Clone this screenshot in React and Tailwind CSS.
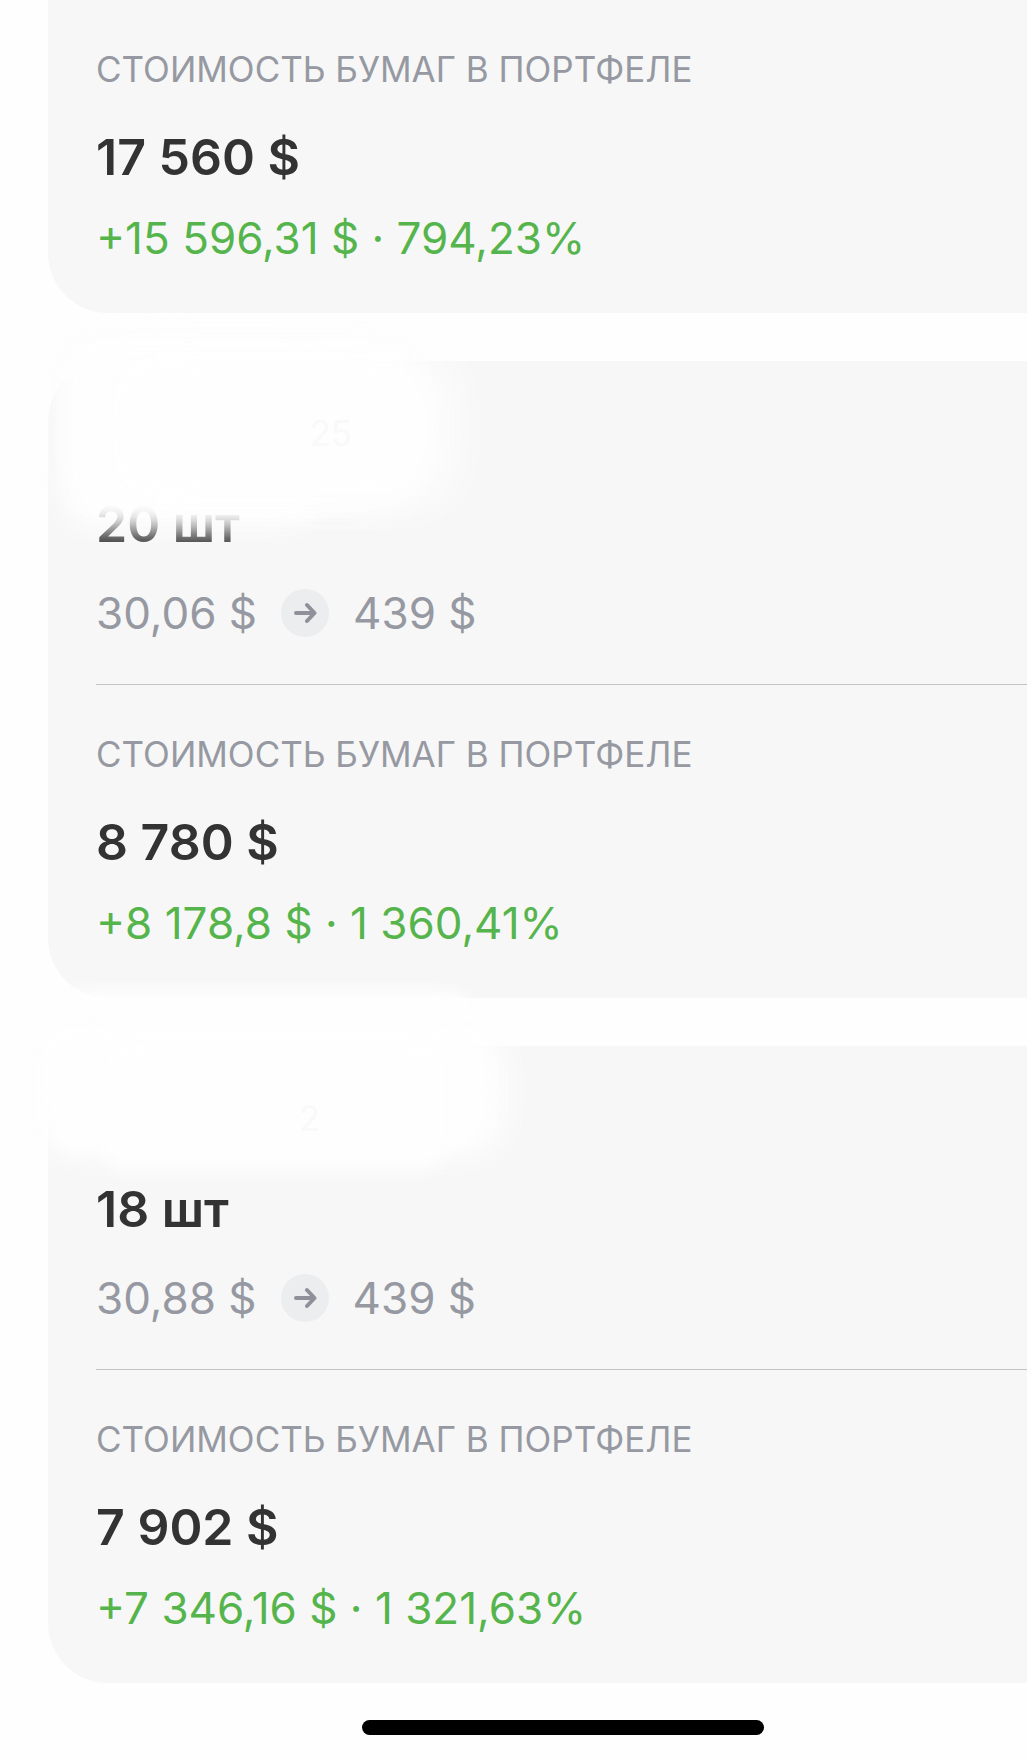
import React from "react";

const POSITIONS = [
  {
    id: 1,
    total: "17 560 $",
    profit: "+15 596,31 $ · 794,23%",
  },
  {
    id: 2,
    name: "25",
    nameClass: "w-64",
    count: "20 шт",
    from: "30,06 $",
    to: "439 $",
    total: "8 780 $",
    profit: "+8 178,8 $ · 1 360,41%",
    // soft white cover over the name
    cover: [
      "left-4 -top-5 h-[186px] w-[250px] rounded-[24px] blur-[14px]",
      "left-4 -top-5 h-[170px] w-[350px] rounded-[40px] blur-[16px]",
      "left-16 -top-2 h-[150px] w-[340px] rounded-[40px] blur-[24px]",
    ],
  },
  {
    id: 3,
    name: "2",
    nameClass: "w-56",
    count: "18 шт",
    from: "30,88 $",
    to: "439 $",
    total: "7 902 $",
    profit: "+7 346,16 $ · 1 321,63%",
    cover: [
      "left-1 -top-[56px] h-[160px] w-[420px] rounded-[24px] blur-[8px]",
      "-left-3 -top-5 h-[130px] w-[470px] rounded-[40px] blur-[16px]",
      "left-14 top-0 h-[124px] w-[340px] rounded-[20px] blur-[10px]",
    ],
  },
];

const ArrowBadge = () => (
  <span className="flex h-12 w-12 items-center justify-center rounded-full bg-[#ebedef]">
    <svg
      className="h-6 w-6"
      viewBox="0 0 24 24"
      fill="none"
      stroke="#8e9199"
      strokeWidth="4"
      strokeLinecap="round"
      strokeLinejoin="round"
      aria-hidden="true"
    >
      <path d="M3 12h18M14 4L21.5 12L14 20" />
    </svg>
  </span>
);

const Summary = ({ total, profit }) => (
  <div className="pt-12">
    <p className="text-[35px] leading-[42px] text-[#9699a2]">
      СТОИМОСТЬ БУМАГ В ПОРТФЕЛЕ
    </p>
    <p className="mt-9 text-[50px] leading-[62px] font-semibold text-[#333333]">
      {total}
    </p>
    <p className="mt-5 text-[44px] leading-[60px] text-[#55b54c]">{profit}</p>
  </div>
);

const PositionCard = ({ item }) => (
  <section className="relative rounded-l-[60px] bg-[#f7f7f7] pt-[47px] pb-[45px] pl-12">
    <h2
      className={`relative z-10 text-right text-[35px] leading-[50px] text-[#f9f9f9] ${item.nameClass}`}
    >
      {item.name}
    </h2>
    <p className="mt-9 text-[50px] leading-[60px] font-semibold text-[#333333]">
      {item.count}
    </p>
    <div className="mt-[29px] flex items-center gap-6 text-[44px] leading-[60px] text-[#9699a2]">
      <span>{item.from}</span>
      <ArrowBadge />
      <span>{item.to}</span>
    </div>
    <hr className="mt-[41px] border-[#c4c4c6]" />
    <Summary total={item.total} profit={item.profit} />

    {item.cover.map((shape) => (
      <div key={shape} className={`absolute bg-[#fefefe] ${shape}`} />
    ))}
  </section>
);

const App = () => {
  const [first, second, third] = POSITIONS;

  return (
    <main className="overflow-hidden bg-[#fefefe] pb-6 font-['Inter','Liberation_Sans',sans-serif]">
      <div className="flex flex-col gap-12 pl-12">
        {/* Card scrolled under the top edge */}
        <section className="rounded-bl-[60px] bg-[#f7f7f7] pb-[45px] pl-12">
          <Summary total={first.total} profit={first.profit} />
        </section>

        <PositionCard item={second} />
        <PositionCard item={third} />
      </div>

      {/* Home indicator */}
      <div className="mt-[37px] flex justify-center pl-[99px]">
        <div className="h-[15px] w-[402px] rounded-full bg-black" />
      </div>
    </main>
  );
};

export default App;
